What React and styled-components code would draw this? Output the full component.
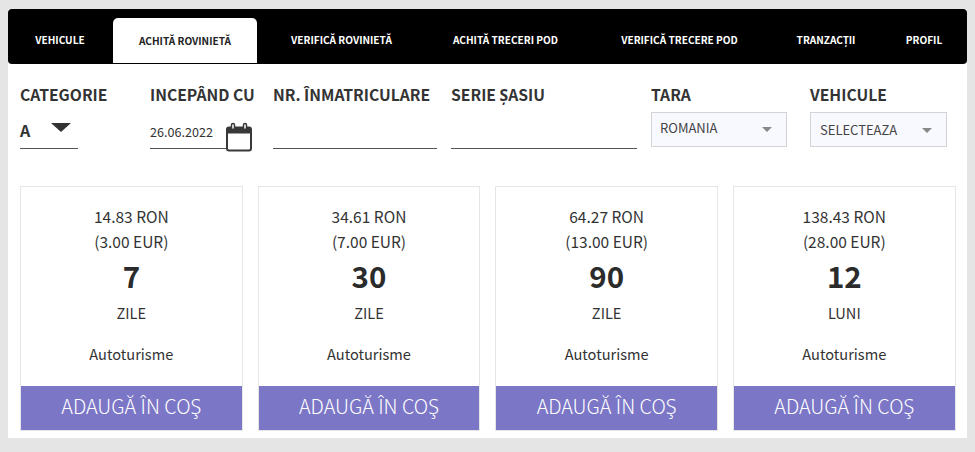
import React from 'react';
import styled, { createGlobalStyle } from 'styled-components';

const tabs = [
  { label: 'VEHICULE', width: 104 },
  { label: 'ACHITĂ ROVINIETĂ', width: 144, active: true },
  { label: 'VERIFICĂ ROVINIETĂ', width: 169 },
  { label: 'ACHITĂ TRECERI POD', width: 159 },
  { label: 'VERIFICĂ TRECERE POD', width: 189 },
  { label: 'TRANZACȚII', width: 104 },
  { label: 'PROFIL', width: 92 },
];

const plans = [
  { ron: '14.83 RON', eur: '(3.00 EUR)', amount: '7', unit: 'ZILE' },
  { ron: '34.61 RON', eur: '(7.00 EUR)', amount: '30', unit: 'ZILE' },
  { ron: '64.27 RON', eur: '(13.00 EUR)', amount: '90', unit: 'ZILE' },
  { ron: '138.43 RON', eur: '(28.00 EUR)', amount: '12', unit: 'LUNI' },
];

const CalendarIcon = () => (
  <svg width="28" height="30" viewBox="0 0 28 30" fill="none" stroke="#383838" strokeWidth="2">
    <rect x="3" y="5.5" width="24" height="23" rx="2" fill="#fff" />
    <path d="M3 8.5h24" strokeWidth="6" />
    <rect x="7.5" y="1.5" width="3" height="6" rx="1.5" fill="#fff" strokeWidth="1.5" />
    <rect x="19.5" y="1.5" width="3" height="6" rx="1.5" fill="#fff" strokeWidth="1.5" />
  </svg>
);

const App = () => {
  return (
    <>
      <GlobalStyle />
      <Panel>
        <Nav>
          {tabs.map((tab) => (
            <Tab key={tab.label} $width={tab.width} $active={tab.active}>
              {tab.label}
            </Tab>
          ))}
        </Nav>
        <Form>
          <Field $width={58} $gap={72}>
            <Label>CATEGORIE</Label>
            <UnderlineBox>
              <CategoryValue>A</CategoryValue>
              <CategoryArrow />
            </UnderlineBox>
          </Field>
          <Field $width={104} $gap={19}>
            <Label>INCEPÂND CU</Label>
            <UnderlineBox $short>
              <DateValue>26.06.2022</DateValue>
              <CalendarWrap>
                <CalendarIcon />
              </CalendarWrap>
            </UnderlineBox>
          </Field>
          <Field $width={164} $gap={14}>
            <Label>NR. ÎNMATRICULARE</Label>
            <UnderlineBox />
          </Field>
          <Field $width={186} $gap={14}>
            <Label>SERIE ȘASIU</Label>
            <UnderlineBox />
          </Field>
          <Field $width={136} $gap={23}>
            <Label>TARA</Label>
            <SelectBox $raised>
              ROMANIA
              <SelectArrow $raised />
            </SelectBox>
          </Field>
          <Field $width={137} $gap={0}>
            <Label>VEHICULE</Label>
            <SelectBox>
              SELECTEAZA
              <SelectArrow />
            </SelectBox>
          </Field>
        </Form>
        <Cards>
          {plans.map((plan) => (
            <Card key={plan.ron}>
              <Price>{plan.ron}</Price>
              <Price>{plan.eur}</Price>
              <Amount>{plan.amount}</Amount>
              <Unit>{plan.unit}</Unit>
              <Kind>Autoturisme</Kind>
              <AddButton>ADAUGĂ ÎN COŞ</AddButton>
            </Card>
          ))}
        </Cards>
      </Panel>
    </>
  );
};

export default App;

const GlobalStyle = createGlobalStyle`
  html, body {
    margin: 0;
    padding: 0;
    background: #e5e5e5;
  }
  body {
    font-family: "Noto Sans CJK SC", "Noto Sans", sans-serif;
    color: #333;
  }
`;

const Panel = styled.div`
  width: 959px;
  height: 429px;
  margin: 9px 0 0 8px;
  background: #fff;
  overflow: hidden;
`;

const Nav = styled.div`
  display: flex;
  align-items: flex-end;
  height: 55px;
  background: #000;
  border-radius: 4px;
`;

const Tab = styled.div`
  width: ${({ $width }) => $width}px;
  height: ${({ $active }) => ($active ? '45px' : '55px')};
  box-sizing: border-box;
  margin-left: ${({ $active }) => ($active ? '1px' : '0')};
  margin-bottom: ${({ $active }) => ($active ? '1px' : '0')};
  padding-top: ${({ $active }) => ($active ? '0' : '7px')};
  flex: none;
  display: flex;
  align-items: center;
  justify-content: center;
  font-size: 10.1px;
  font-weight: 700;
  line-height: 14px;
  white-space: nowrap;
  background: ${({ $active }) => ($active ? '#fff' : 'transparent')};
  color: ${({ $active }) => ($active ? '#222' : '#fff')};
  border-radius: ${({ $active }) => ($active ? '5px 5px 0 0' : '0')};
`;

const Form = styled.div`
  display: flex;
  padding: 20px 0 0 12px;
`;

const Field = styled.div`
  width: ${({ $width }) => $width}px;
  margin-right: ${({ $gap }) => $gap}px;
  flex: none;
`;

const Label = styled.div`
  font-size: 15.7px;
  font-weight: 700;
  line-height: 22px;
  white-space: nowrap;
  color: #333;
`;

const UnderlineBox = styled.div`
  position: relative;
  display: flex;
  align-items: center;
  width: ${({ $short }) => ($short ? '80px' : '100%')};
  height: 33px;
  margin-top: 9px;
  border-bottom: 1px solid #555;
`;

const CategoryValue = styled.span`
  font-size: 16px;
  font-weight: 700;
  line-height: 20px;
  margin-top: -3px;
`;

const CategoryArrow = styled.span`
  margin: -9px 0 0 21px;
  border-style: solid;
  border-width: 9px 10px 0;
  border-color: #333 transparent transparent;
`;

const DateValue = styled.span`
  font-size: 12.6px;
  line-height: 18px;
  white-space: nowrap;
`;

const CalendarWrap = styled.span`
  position: absolute;
  left: 74px;
  top: 7px;
  display: flex;
`;

const SelectBox = styled.div`
  position: relative;
  box-sizing: border-box;
  display: flex;
  align-items: center;
  height: 35px;
  margin-top: 6px;
  padding-left: ${({ $raised }) => ($raised ? '8px' : '9px')};
  padding-bottom: ${({ $raised }) => ($raised ? '4px' : '0')};
  background: #f8f8ff;
  border: 1px solid #d4d4d4;
  font-size: 13px;
  line-height: 18px;
  color: #444;
`;

const SelectArrow = styled.span`
  position: absolute;
  right: 14px;
  top: ${({ $raised }) => ($raised ? '14px' : '15px')};
  border-style: solid;
  border-width: 5px 5px 0;
  border-color: #888 transparent transparent;
`;

const Cards = styled.div`
  display: flex;
  gap: 15px;
  padding: 37px 0 0 12px;
`;

const Card = styled.div`
  box-sizing: border-box;
  width: 222.67px;
  height: 245px;
  display: flex;
  flex-direction: column;
  align-items: center;
  padding-top: 17px;
  border: 1px solid #e6e6e6;
`;

const Price = styled.div`
  font-size: 15.5px;
  line-height: 25px;
  color: #333;
`;

const Amount = styled.div`
  font-size: 29.5px;
  font-weight: 700;
  line-height: 40px;
  margin-top: 1px;
  color: #2b2b2b;
`;

const Unit = styled.div`
  font-size: 14.6px;
  line-height: 22px;
  margin-top: 7px;
`;

const Kind = styled.div`
  font-size: 14.6px;
  line-height: 22px;
  margin-top: 19px;
`;

const AddButton = styled.div`
  width: 100%;
  height: 44px;
  box-sizing: border-box;
  margin-top: auto;
  padding-bottom: 4px;
  display: flex;
  align-items: center;
  justify-content: center;
  background: #7b76c6;
  color: #fff;
  font-size: 19.8px;
  font-weight: 300;
  line-height: 28px;
`;
